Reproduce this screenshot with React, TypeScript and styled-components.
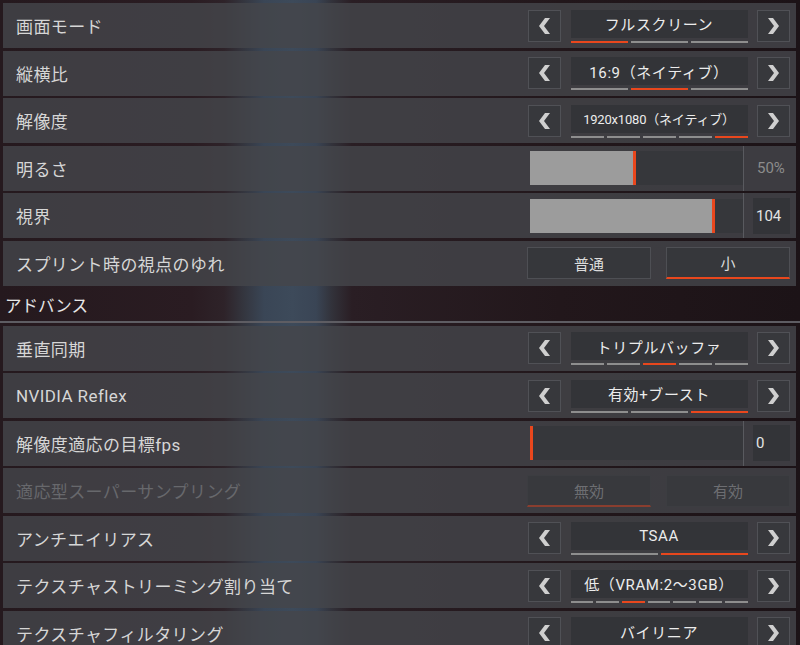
import React from 'react'
import styled, { createGlobalStyle } from 'styled-components'

const ORANGE = '#e9471d'
const FONT = `Roboto, "Noto Sans CJK JP", sans-serif`

const GlobalStyle = createGlobalStyle`
  html, body {
    margin: 0;
    padding: 0;
    background: #1f1519;
  }
  * {
    box-sizing: border-box;
  }
`

type Selector = { kind: 'select', label: string, value: string, count: number, active: number, small?: boolean }
type Slider = { kind: 'slider', label: string, pct: number, value: string, boxed: boolean }
type Toggle = { kind: 'toggle', label: string, options: string[], active: number, disabled?: boolean }
type Item = Selector | Slider | Toggle

const general: Item[] = [
    { kind: 'select', label: '画面モード', value: 'フルスクリーン', count: 3, active: 0 },
    { kind: 'select', label: '縦横比', value: '16:9（ネイティブ）', count: 3, active: 1 },
    { kind: 'select', label: '解像度', value: '1920x1080（ネイティブ）', count: 5, active: 4, small: true },
    { kind: 'slider', label: '明るさ', pct: 48.4, value: '50%', boxed: false },
    { kind: 'slider', label: '視界', pct: 85.4, value: '104', boxed: true },
    { kind: 'toggle', label: 'スプリント時の視点のゆれ', options: ['普通', '小'], active: 1 },
]

const advanced: Item[] = [
    { kind: 'select', label: '垂直同期', value: 'トリプルバッファ', count: 5, active: 2 },
    { kind: 'select', label: 'NVIDIA Reflex', value: '有効+ブースト', count: 3, active: 2 },
    { kind: 'slider', label: '解像度適応の目標fps', pct: 0, value: '0', boxed: true },
    { kind: 'toggle', label: '適応型スーパーサンプリング', options: ['無効', '有効'], active: 0, disabled: true },
    { kind: 'select', label: 'アンチエイリアス', value: 'TSAA', count: 2, active: 1 },
    { kind: 'select', label: 'テクスチャストリーミング割り当て', value: '低（VRAM:2〜3GB）', count: 7, active: 2 },
    { kind: 'select', label: 'テクスチャフィルタリング', value: 'バイリニア', count: 4, active: 0 },
]

const Chevron = ({ right }: { right?: boolean }) => (
    <svg width="11" height="16" viewBox="0 0 11 16">
        <polygon
            points={right ? '0,0 5,0 11,8 5,16 0,16 6,8' : '11,0 6,0 0,8 6,16 11,16 5,8'}
            fill="#cfcfcf"
        />
    </svg>
)

const SelectControl = ({ item }: { item: Selector }) => (
    <SelectWrap>
        <ArrowBtn><Chevron /></ArrowBtn>
        <ValueCol>
            <ValueBox $small={item.small}>{item.value}</ValueBox>
            <Segments>
                {Array.from({ length: item.count }).map((_, i) => (
                    <Segment key={i} $active={i === item.active} />
                ))}
            </Segments>
        </ValueCol>
        <ArrowBtn><Chevron right /></ArrowBtn>
    </SelectWrap>
)

const SliderControl = ({ item }: { item: Slider }) => (
    <SliderWrap>
        <Track>
            <Fill style={{ width: `${item.pct}%` }} />
            <Thumb />
        </Track>
        <Separator />
        <NumberCell>
            <NumberBox $boxed={item.boxed}>{item.value}</NumberBox>
        </NumberCell>
    </SliderWrap>
)

const ToggleControl = ({ item }: { item: Toggle }) => (
    <ToggleGroup>
        {item.options.map((o, i) => (
            <ToggleBtn key={o} $active={i === item.active} $disabled={item.disabled}>{o}</ToggleBtn>
        ))}
    </ToggleGroup>
)

const SettingRow = ({ item }: { item: Item }) => {
    const disabled = item.kind === 'toggle' && item.disabled
    return (
        <Row>
            <Label $disabled={disabled}>{item.label}</Label>
            {item.kind === 'select' ? <SelectControl item={item} />
                : item.kind === 'slider' ? <SliderControl item={item} />
                : <ToggleControl item={item} />}
        </Row>
    )
}

export default function App() {
    return (
        <>
            <GlobalStyle />
            <Page>
                {general.map(item => <SettingRow key={item.label} item={item} />)}
                <SectionHeader>アドバンス</SectionHeader>
                {advanced.map(item => <SettingRow key={item.label} item={item} />)}
            </Page>
        </>
    )
}

const Page = styled.div`
    width: 800px;
    height: 645px;
    overflow: hidden;
    padding: 3px 4px 0 3px;
    display: flex;
    flex-direction: column;
    gap: 2.5px;
    font-family: ${FONT};
    background: linear-gradient(90deg,
        #25191e 0%, #2a1c22 24%, #2e2329 28%, #34363f 30.5%, #3a4656 33%,
        #3d4a5a 36.5%, #3a4555 39.5%, #32323a 41.5%, #2a1e24 44%,
        #22171b 70%, #1c1317 100%);
`
const Row = styled.div`
    flex: none;
    height: 45px;
    display: flex;
    align-items: center;
    justify-content: space-between;
    padding-left: 13px;
    background: rgba(68, 69, 74, 0.82);
`
const Label = styled.span<{ $disabled?: boolean }>`
    font-size: 17px;
    letter-spacing: 0.4px;
    color: ${p => p.$disabled ? '#67686c' : '#d6d6d6'};
    white-space: nowrap;
`
const SectionHeader = styled.div`
    flex: none;
    height: 35px;
    margin: 0 -4px 0 -3px;
    padding-left: 5px;
    display: flex;
    align-items: center;
    font-size: 16.5px;
    color: #e6e6e6;
    border-bottom: 2px solid #5e5d63;
`
const SelectWrap = styled.div`
    display: flex;
    align-items: center;
    gap: 9.5px;
    margin-right: 6px;
`
const ArrowBtn = styled.div`
    width: 33px;
    height: 32px;
    display: flex;
    align-items: center;
    justify-content: center;
    background: #37383c;
    border: 1px solid #505156;
`
const ValueCol = styled.div`
    width: 177px;
    display: flex;
    flex-direction: column;
    gap: 3px;
    margin-top: 1px;
`
const ValueBox = styled.div<{ $small?: boolean }>`
    height: 28px;
    display: flex;
    align-items: center;
    justify-content: center;
    background: #333438;
    color: #ececec;
    font-size: ${p => p.$small ? '13px' : '15px'};
    letter-spacing: ${p => p.$small ? '-0.2px' : '0.6px'};
    white-space: nowrap;
`
const Segments = styled.div`
    display: flex;
    gap: 3px;
    height: 2px;
`
const Segment = styled.div<{ $active: boolean }>`
    flex: 1;
    background: ${p => p.$active ? ORANGE : '#8e8e8e'};
`
const SliderWrap = styled.div`
    align-self: stretch;
    display: flex;
    align-items: center;
`
const Track = styled.div`
    width: 213px;
    height: 34px;
    display: flex;
    background: #36373b;
`
const Fill = styled.div`
    height: 100%;
    background: #9c9c9c;
`
const Thumb = styled.div`
    width: 3px;
    height: 100%;
    background: ${ORANGE};
`
const Separator = styled.div`
    align-self: stretch;
    width: 1px;
    background: #595a5f;
`
const NumberCell = styled.div`
    width: 52px;
    padding-left: 9px;
    display: flex;
    align-items: center;
`
const NumberBox = styled.div<{ $boxed: boolean }>`
    width: 37px;
    height: 36px;
    display: flex;
    align-items: center;
    padding-left: ${p => p.$boxed ? '3px' : '4px'};
    background: ${p => p.$boxed ? '#333438' : 'transparent'};
    color: ${p => p.$boxed ? '#e4e4e4' : '#8c8c8c'};
    font-size: 15px;
`
const ToggleGroup = styled.div`
    display: flex;
    gap: 15px;
    margin-right: 6px;
`
const ToggleBtn = styled.div<{ $active: boolean, $disabled?: boolean }>`
    width: 124px;
    height: 32px;
    display: flex;
    align-items: center;
    justify-content: center;
    font-size: 15px;
    color: ${p => p.$disabled ? '#6d6e72' : '#dcdcdc'};
    background: ${p => p.$disabled ? '#38393d' : '#36373b'};
    border: 1px solid ${p => p.$disabled ? '#3c3d41' : '#4e4f54'};
    border-bottom: ${p => p.$active
        ? `2px solid ${p.$disabled ? '#8a3e2f' : ORANGE}`
        : `1px solid ${p.$disabled ? '#3c3d41' : '#4e4f54'}`};
`
